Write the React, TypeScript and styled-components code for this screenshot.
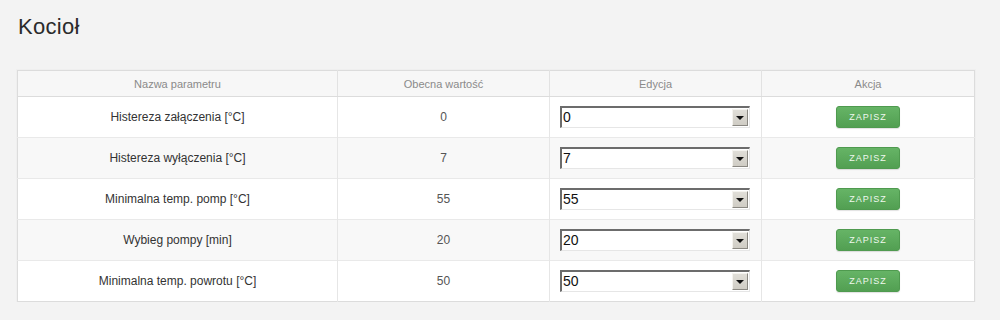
import React from "react";
import styled, { createGlobalStyle } from "styled-components";

const Global = createGlobalStyle`
  html, body { margin: 0; padding: 0; }
  body {
    background: #f3f3f3;
    font-family: "Liberation Sans", Arial, sans-serif;
    color: #333;
  }
`;

const Page = styled.div`
  padding: 14px 25px 0 17px;
`;

const Title = styled.h1`
  margin: 0 0 0 1px;
  font-size: 22px;
  font-weight: normal;
  line-height: 26px;
  color: #2b2b2b;
  letter-spacing: 0.3px;
`;

const Table = styled.table`
  margin-top: 30px;
  width: 957px;
  border-collapse: collapse;
  background: #fff;
  border: 1px solid #dcdcdc;
  box-shadow: 0 0 0 1px #efefef;
  table-layout: fixed;
`;

const Th = styled.th`
  height: 25px;
  padding: 0;
  font-size: 11px;
  font-weight: normal;
  color: #8a8a8a;
  text-align: center;
  background: #f7f7f7;
  border-left: 1px solid #e2e2e2;
  border-bottom: 1px solid #dcdcdc;
  &:first-child { border-left: none; }
`;

const Tr = styled.tr<{ $alt: boolean }>`
  background: ${(p) => (p.$alt ? "#f8f8f8" : "#ffffff")};
`;

const Td = styled.td<{ $muted?: boolean }>`
  height: 40px;
  padding: 0;
  font-size: 12px;
  color: ${(p) => (p.$muted ? "#555" : "#333")};
  text-align: center;
  border-left: 1px solid #e6e6e6;
  border-top: 1px solid #e9e9e9;
  &:first-child { border-left: none; }
`;

const SelectBox = styled.div`
  display: flex;
  align-items: stretch;
  width: 187px;
  height: 19px;
  margin-left: 10px;
  background: #fff;
  border-top: 2px solid #6c6c6c;
  border-left: 2px solid #6c6c6c;
  border-bottom: 1px solid #e6e6e6;
  border-right: 1px solid #e6e6e6;
`;

const SelectValue = styled.div`
  flex: 1;
  text-align: left;
  padding-left: 1px;
  font-size: 14px;
  line-height: 19px;
  color: #111;
  font-family: "Liberation Sans", Arial, sans-serif;
`;

const ArrowBtn = styled.div`
  width: 14px;
  margin: 1px 1px 1px 0;
  background: linear-gradient(#e0ded8, #cfccc4);
  border-top: 1px solid #f4f3ef;
  border-left: 1px solid #f4f3ef;
  border-right: 1px solid #8a8882;
  border-bottom: 1px solid #8a8882;
  display: flex;
  align-items: center;
  justify-content: center;
`;

const Tri = styled.div`
  width: 0;
  height: 0;
  border-left: 4px solid transparent;
  border-right: 4px solid transparent;
  border-top: 4px solid #111;
  margin-top: 1px;
`;

const SaveButton = styled.button`
  width: 64px;
  height: 22px;
  padding: 0;
  border: 1px solid #4f9a4f;
  border-radius: 3px;
  background: linear-gradient(#66b466, #529f52);
  color: #eef8ee;
  font-family: "Liberation Sans", Arial, sans-serif;
  font-size: 9px;
  letter-spacing: 1px;
  cursor: pointer;
  box-shadow: 0 1px 1px rgba(0, 0, 0, 0.12);
`;

const rows = [
  { name: "Histereza załączenia [°C]", value: "0" },
  { name: "Histereza wyłączenia [°C]", value: "7" },
  { name: "Minimalna temp. pomp [°C]", value: "55" },
  { name: "Wybieg pompy [min]", value: "20" },
  { name: "Minimalna temp. powrotu [°C]", value: "50" },
];

export default function App() {
  return (
    <Page>
      <Global />
      <Title>Kocioł</Title>
      <Table>
        <colgroup>
          <col style={{ width: 320 }} />
          <col style={{ width: 212 }} />
          <col style={{ width: 212 }} />
          <col style={{ width: 213 }} />
        </colgroup>
        <thead>
          <tr>
            <Th>Nazwa parametru</Th>
            <Th>Obecna wartość</Th>
            <Th>Edycja</Th>
            <Th>Akcja</Th>
          </tr>
        </thead>
        <tbody>
          {rows.map((r, i) => (
            <Tr key={r.name} $alt={i % 2 === 1}>
              <Td>{r.name}</Td>
              <Td $muted>{r.value}</Td>
              <Td>
                <SelectBox>
                  <SelectValue>{r.value}</SelectValue>
                  <ArrowBtn>
                    <Tri />
                  </ArrowBtn>
                </SelectBox>
              </Td>
              <Td>
                <SaveButton>ZAPISZ</SaveButton>
              </Td>
            </Tr>
          ))}
        </tbody>
      </Table>
    </Page>
  );
}
